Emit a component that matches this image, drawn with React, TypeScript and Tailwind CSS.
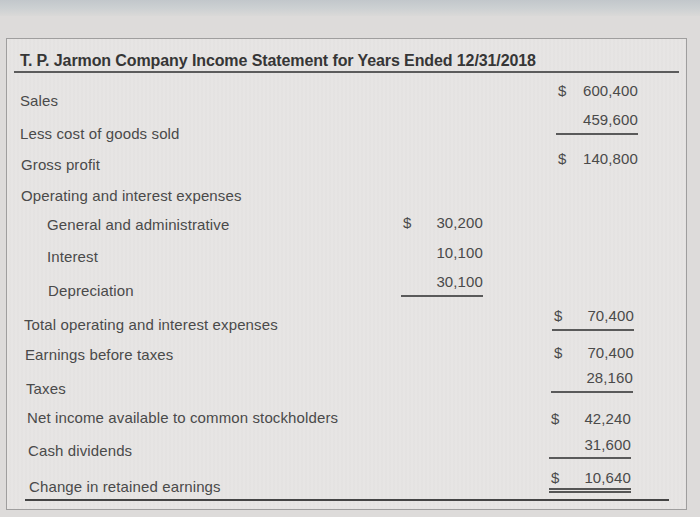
import React from "react";

type Val = { d?: boolean; a: string; line?: "single" | "double" };
type Row = {
  label: string;
  row: string;
  lab: string;
  mid?: Val;
  midCls?: string;
  right?: Val;
  rightCls?: string;
};

const rows: Row[] = [
  { label: "Sales", row: "h-[29px]", lab: "pl-[6px] pt-[10px]", right: { d: true, a: "600,400" }, rightCls: "pt-0 mr-[41px]" },
  { label: "Less cost of goods sold", row: "h-[39px]", lab: "pl-[6px] pt-[14px]", right: { a: "459,600", line: "single" }, rightCls: "pt-0 mr-[41px] pb-[3px]" },
  { label: "Gross profit", row: "h-[37px]", lab: "pl-[7px] pt-[6px]", right: { d: true, a: "140,800" }, rightCls: "pt-0 mr-[41px]" },
  { label: "Operating and interest expenses", row: "h-[27px]", lab: "pl-[7px] pt-0", rightCls: "mr-[41px]" },
  { label: "General and administrative", row: "h-[30px]", lab: "pl-[33px] pt-[2px]", mid: { d: true, a: "30,200" }, midCls: "pt-0", rightCls: "mr-[41px]" },
  { label: "Interest", row: "h-[29px]", lab: "pl-[33px] pt-[4px]", mid: { a: "10,100" }, midCls: "pt-0", rightCls: "mr-[41px]" },
  { label: "Depreciation", row: "h-[34px]", lab: "pl-[34px] pt-[9px]", mid: { a: "30,100", line: "single" }, midCls: "pt-0 pb-[3px]", rightCls: "mr-[41px]" },
  { label: "Total operating and interest expenses", row: "h-[37px]", lab: "pl-[10px] pt-[9px]", right: { d: true, a: "70,400", line: "single" }, rightCls: "pt-0 mr-[45px] pb-[3px]" },
  { label: "Earnings before taxes", row: "h-[25px]", lab: "pl-[11px] pt-[2px]", right: { d: true, a: "70,400" }, rightCls: "pt-0 mr-[45px]" },
  { label: "Taxes", row: "h-[40px]", lab: "pl-[12px] pt-[11px]", right: { a: "28,160", line: "single" }, rightCls: "pt-0 mr-[46px] pb-[3px]" },
  { label: "Net income available to common stockholders", row: "h-[27px]", lab: "pl-[13px] pt-0", right: { d: true, a: "42,240" }, rightCls: "pt-[1px] mr-[48px]" },
  { label: "Cash dividends", row: "h-[33px]", lab: "pl-[14px] pt-[6px]", right: { a: "31,600", line: "single" }, rightCls: "pt-0 mr-[48px] pb-[2px]" },
];

function Cell({ v, cls }: { v?: Val; cls?: string }) {
  const line =
    v?.line === "single"
      ? "border-b-[2px] border-[#5a5a5a]"
      : v?.line === "double"
      ? "border-b-[5px] border-double border-[#555]"
      : "";
  return (
    <div className={`w-[82px] shrink-0 flex ${v?.d ? "justify-between" : "justify-end"} ${line} ${cls ?? ""}`}>
      {v ? (
        <>
          {v.d && <span className="pl-[2px]">$</span>}
          <span>{v.a}</span>
        </>
      ) : (
        <span>&nbsp;</span>
      )}
    </div>
  );
}

export default function App() {
  return (
    <div
      className="w-[700px] h-[517px] overflow-hidden bg-[#dddbda] text-[15px] leading-[20px] text-[#4a4a4a]"
      style={{ fontFamily: '"Liberation Sans", Arial, sans-serif' }}
    >
      <div className="h-[16px] bg-gradient-to-b from-[#c2c7cb] via-[#ccd0d2] to-[#dad9d8]" />
      <div className="ml-[6px] mt-[22px] w-[681px] h-[472px] border border-[#9f9e9e] bg-[#e6e4e3] bg-[repeating-linear-gradient(90deg,#e7e5e4_0px,#e7e5e4_2px,#e2e0df_3px,#e7e5e4_4px)] px-[7px] pt-[12px]">
        <div className="border-b-[2px] border-[#5c5c5c] pl-[6px] h-[22px] text-[16px] leading-[20px] font-bold text-[#363636] tracking-[-0.1px]">
          T. P. Jarmon Company Income Statement for Years Ended 12/31/2018
        </div>
        <div className="mt-[8px] tracking-[0.12px]">
          {rows.map((r) => (
            <div key={r.label} className={`flex items-start ${r.row}`}>
              <div className={`flex-1 whitespace-nowrap ${r.lab}`}>{r.label}</div>
              <Cell v={r.mid} cls={r.midCls} />
              <div className="w-[73px] shrink-0" />
              <Cell v={r.right} cls={r.rightCls} />
            </div>
          ))}
          <div className="ml-[11px] mr-[10px] h-[33px] flex items-start border-b-[2px] border-[#444]">
            <div className="flex-1 whitespace-nowrap pl-[4px] pt-[9px]">Change in retained earnings</div>
            <Cell />
            <div className="w-[73px] shrink-0" />
            <Cell v={{ d: true, a: "10,640", line: "double" }} cls="pt-0 mr-[38px]" />
          </div>
        </div>
      </div>
    </div>
  );
}
